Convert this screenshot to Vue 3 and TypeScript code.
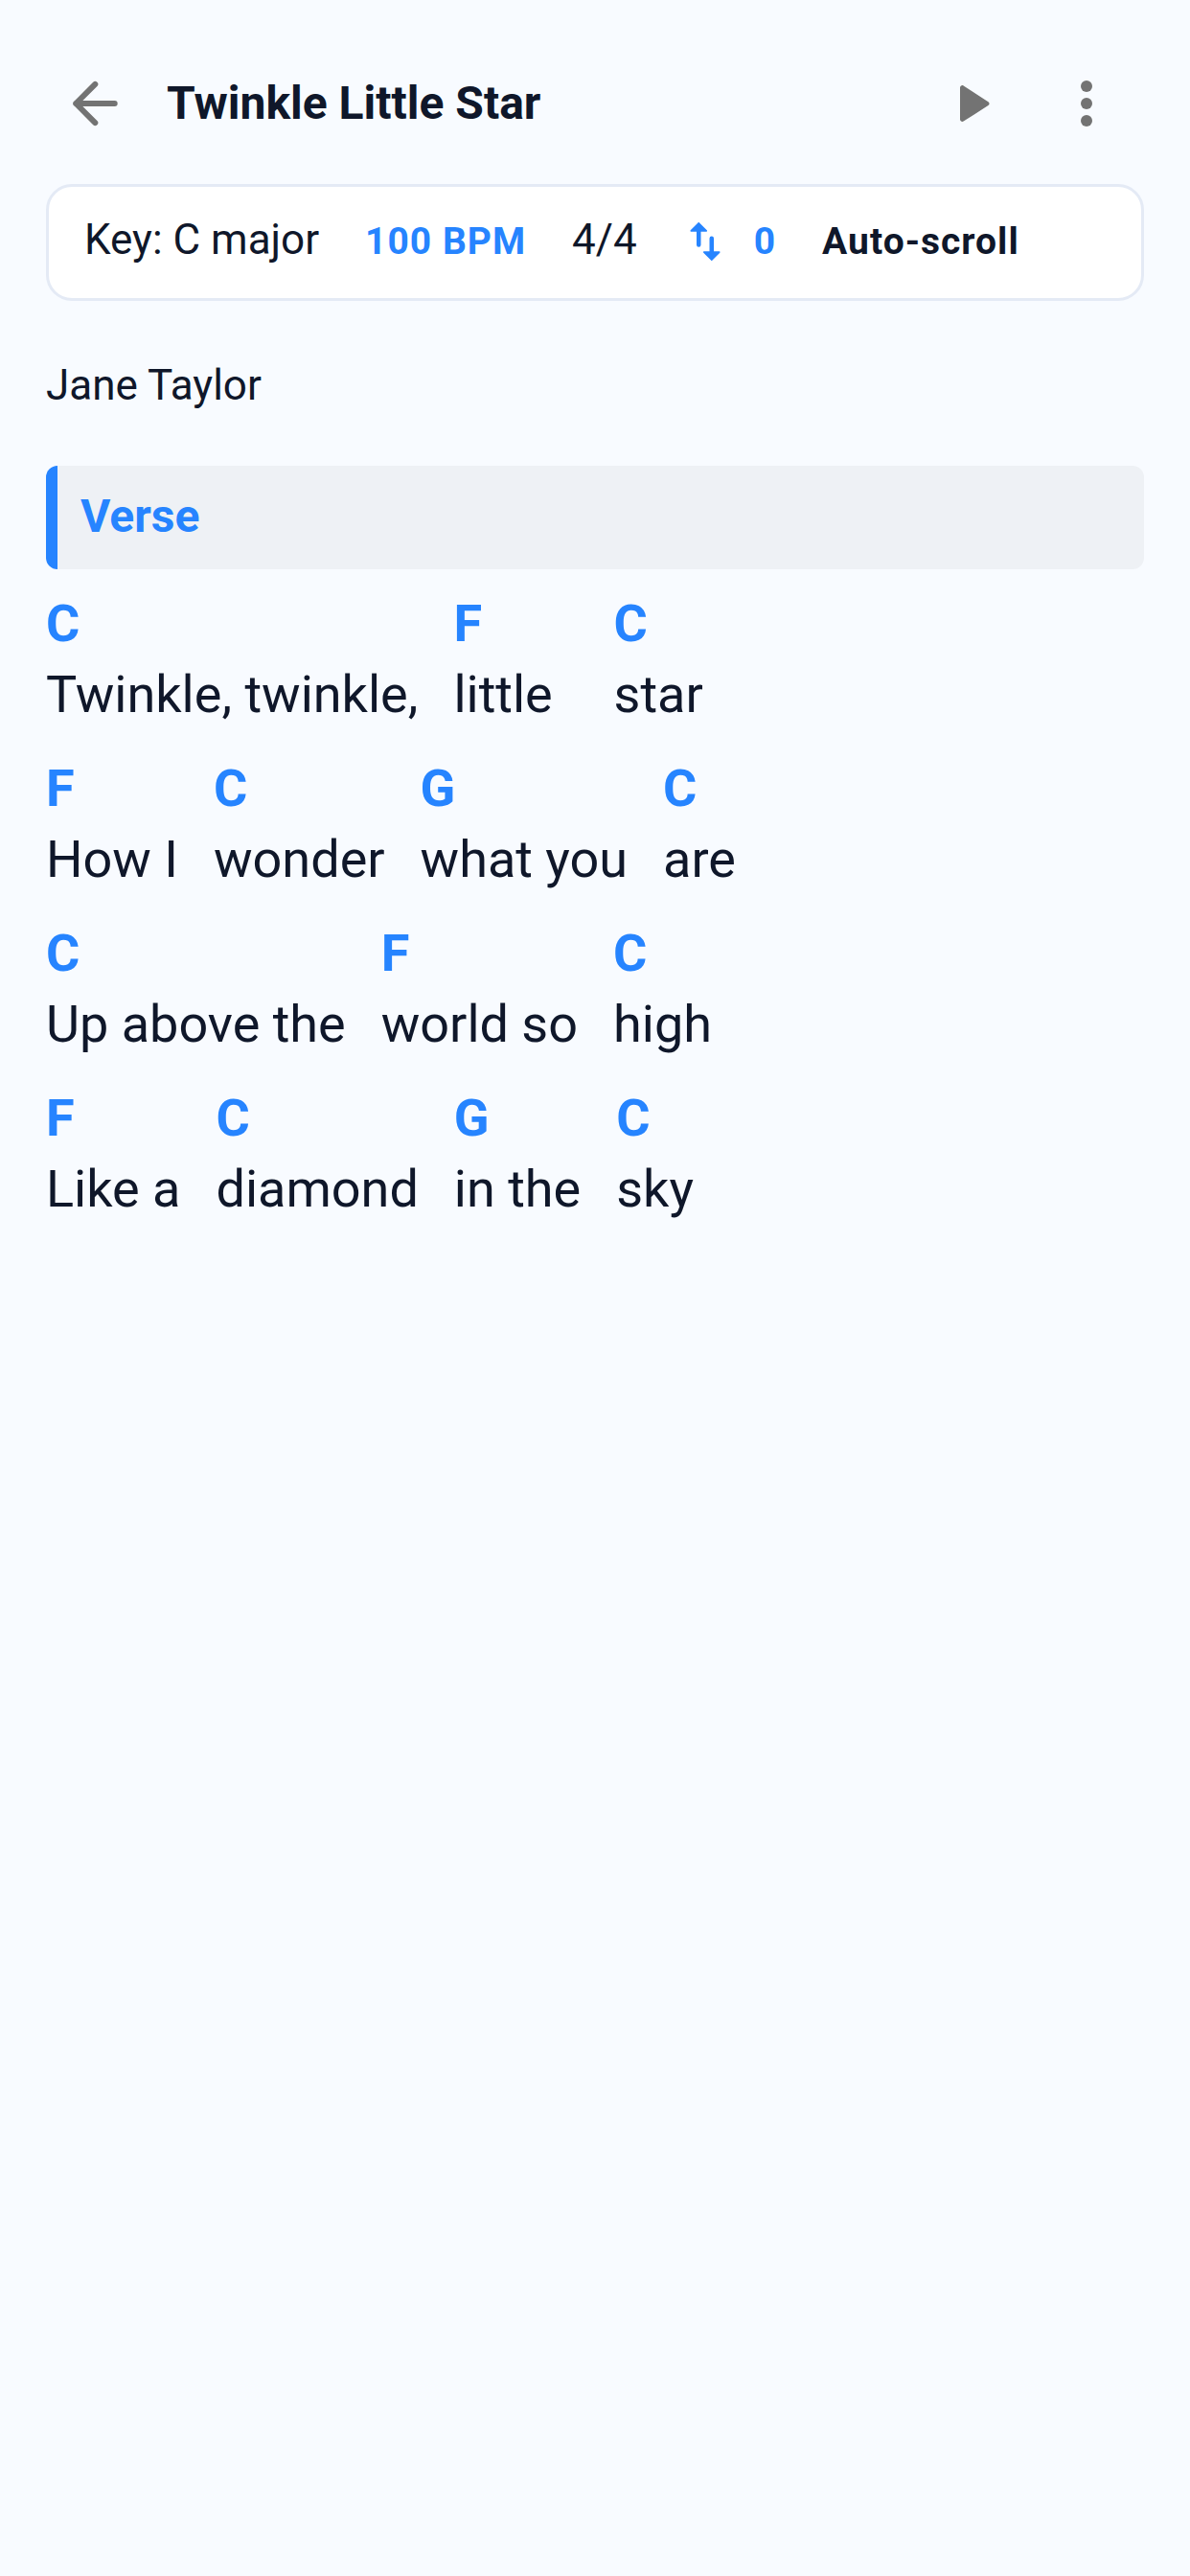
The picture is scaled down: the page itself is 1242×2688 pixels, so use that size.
<script setup lang="ts">
interface Segment {
  chord: string
  text: string
}

// the trailing spaces on "little" are in the sheet itself, they push "star" along
const lines: Segment[][] = [
  [
    { chord: 'C', text: 'Twinkle, twinkle,' },
    { chord: 'F', text: 'little  ' },
    { chord: 'C', text: 'star' },
  ],
  [
    { chord: 'F', text: 'How I' },
    { chord: 'C', text: 'wonder' },
    { chord: 'G', text: 'what you' },
    { chord: 'C', text: 'are' },
  ],
  [
    { chord: 'C', text: 'Up above the' },
    { chord: 'F', text: 'world so' },
    { chord: 'C', text: 'high' },
  ],
  [
    { chord: 'F', text: 'Like a' },
    { chord: 'C', text: 'diamond' },
    { chord: 'G', text: 'in the' },
    { chord: 'C', text: 'sky' },
  ],
]
</script>

<template>
  <div class="screen">
    <header class="topbar">
      <button class="icon-btn" aria-label="Back">
        <svg viewBox="0 0 24 24" class="icon">
          <path d="M18.900 12H5.400M12.100 5.300 5.400 12l6.700 6.700" fill="none" stroke="#737373" stroke-width="2" stroke-linecap="round" stroke-linejoin="round" />
        </svg>
      </button>
      <h1 class="title">Twinkle Little Star</h1>
      <button class="icon-btn play" aria-label="Play">
        <svg viewBox="0 0 24 24" class="icon">
          <path d="M8 6.500v11c0 .6.7 1 1.200.7l8.600-5.500c.5-.3.5-1 0-1.300L9.200 5.800C8.700 5.500 8 5.900 8 6.500z" fill="#737373" />
        </svg>
      </button>
      <button class="icon-btn" aria-label="More">
        <svg viewBox="0 0 24 24" class="icon">
          <circle cx="12" cy="6" r="2" fill="#737373" />
          <circle cx="12" cy="12" r="2" fill="#737373" />
          <circle cx="12" cy="18" r="2" fill="#737373" />
        </svg>
      </button>
    </header>

    <section class="meta">
      <span class="meta-plain">Key: C major</span>
      <span class="meta-bold meta-blue">100 BPM</span>
      <span class="meta-plain">4/4</span>
      <span class="meta-transpose">
        <svg viewBox="0 0 24 24" class="swap">
          <path d="M9 3 5.200 6.800c-.2.2-.1.600.2.600H8V13.500a1 1 0 0 0 2 0V7.400h2.600c.3 0 .4-.4.200-.6L9 3zM15 21l3.800-3.800c.2-.2.1-.6-.2-.6H16V10.500a1 1 0 0 0-2 0v6.100h-2.600c-.3 0-.4.4-.2.6L15 21z" fill="#2684ff" />
        </svg>
        <span class="meta-bold meta-blue">0</span>
      </span>
      <span class="meta-bold">Auto-scroll</span>
    </section>

    <p class="artist">Jane Taylor</p>

    <div class="section-head">Verse</div>

    <div class="sheet">
      <div v-for="(line, i) in lines" :key="i" class="line">
        <div v-for="(seg, j) in line" :key="j" class="segment">
          <span class="chord">{{ seg.chord }}</span>
          <span class="lyric">{{ seg.text }}</span>
        </div>
      </div>
    </div>
  </div>
</template>

<style>
html,
body {
  margin: 0;
  background: #f8fbff;
}
</style>

<style scoped>
.screen {
  width: 1242px;
  height: 2688px;
  box-sizing: border-box;
  padding: 72px 48px 0;
  background: #f8fbff;
  font-family: Roboto, "Noto Sans", sans-serif;
  color: #0f172a;
  overflow: hidden;
}

.topbar {
  display: flex;
  align-items: center;
  height: 72px;
  padding: 0 24px 0 15px;
}

.icon-btn {
  width: 72px;
  height: 72px;
  padding: 0;
  border: 0;
  background: none;
  flex: none;
}

.icon {
  display: block;
  width: 72px;
  height: 72px;
}

.play {
  margin-right: 48px;
}

.title {
  flex: 1;
  margin: 0 0 0 39px;
  font-size: 48px;
  font-weight: 700;
  line-height: 72px;
}

.meta {
  display: flex;
  align-items: center;
  height: 122px;
  box-sizing: border-box;
  margin-top: 48px;
  padding: 0 37px 3px;
  gap: 48px;
  background: #fff;
  border: 3px solid #e4eaf5;
  border-radius: 27px;
}

.meta-plain {
  margin-bottom: 3px;
  font-size: 44px;
}

.meta-bold {
  font-size: 39px;
  font-weight: 700;
  letter-spacing: 1px;
}

.meta-blue {
  color: #2684ff;
}

.meta-transpose {
  display: flex;
  align-items: center;
  gap: 24px;
  margin-left: -4px;
}

.swap {
  display: block;
  width: 54px;
  height: 54px;
}

.artist {
  margin: 58px 0 0;
  font-size: 44px;
  line-height: 60px;
}

.section-head {
  height: 108px;
  box-sizing: border-box;
  margin-top: 54px;
  padding-left: 24px;
  background: #eef1f5;
  border-left: 12px solid #2684ff;
  border-radius: 12px;
  color: #2684ff;
  font-size: 48px;
  font-weight: 700;
  line-height: 106px;
}

.sheet {
  display: flex;
  flex-direction: column;
  gap: 32px;
  margin-top: 27px;
}

.line {
  display: flex;
  gap: 37px;
}

.segment {
  display: flex;
  flex-direction: column;
}

.chord {
  color: #2684ff;
  font-size: 54px;
  font-weight: 700;
  line-height: 60px;
}

.lyric {
  font-size: 54px;
  line-height: 72px;
  margin-top: 8px;
  white-space: pre;
}
</style>
